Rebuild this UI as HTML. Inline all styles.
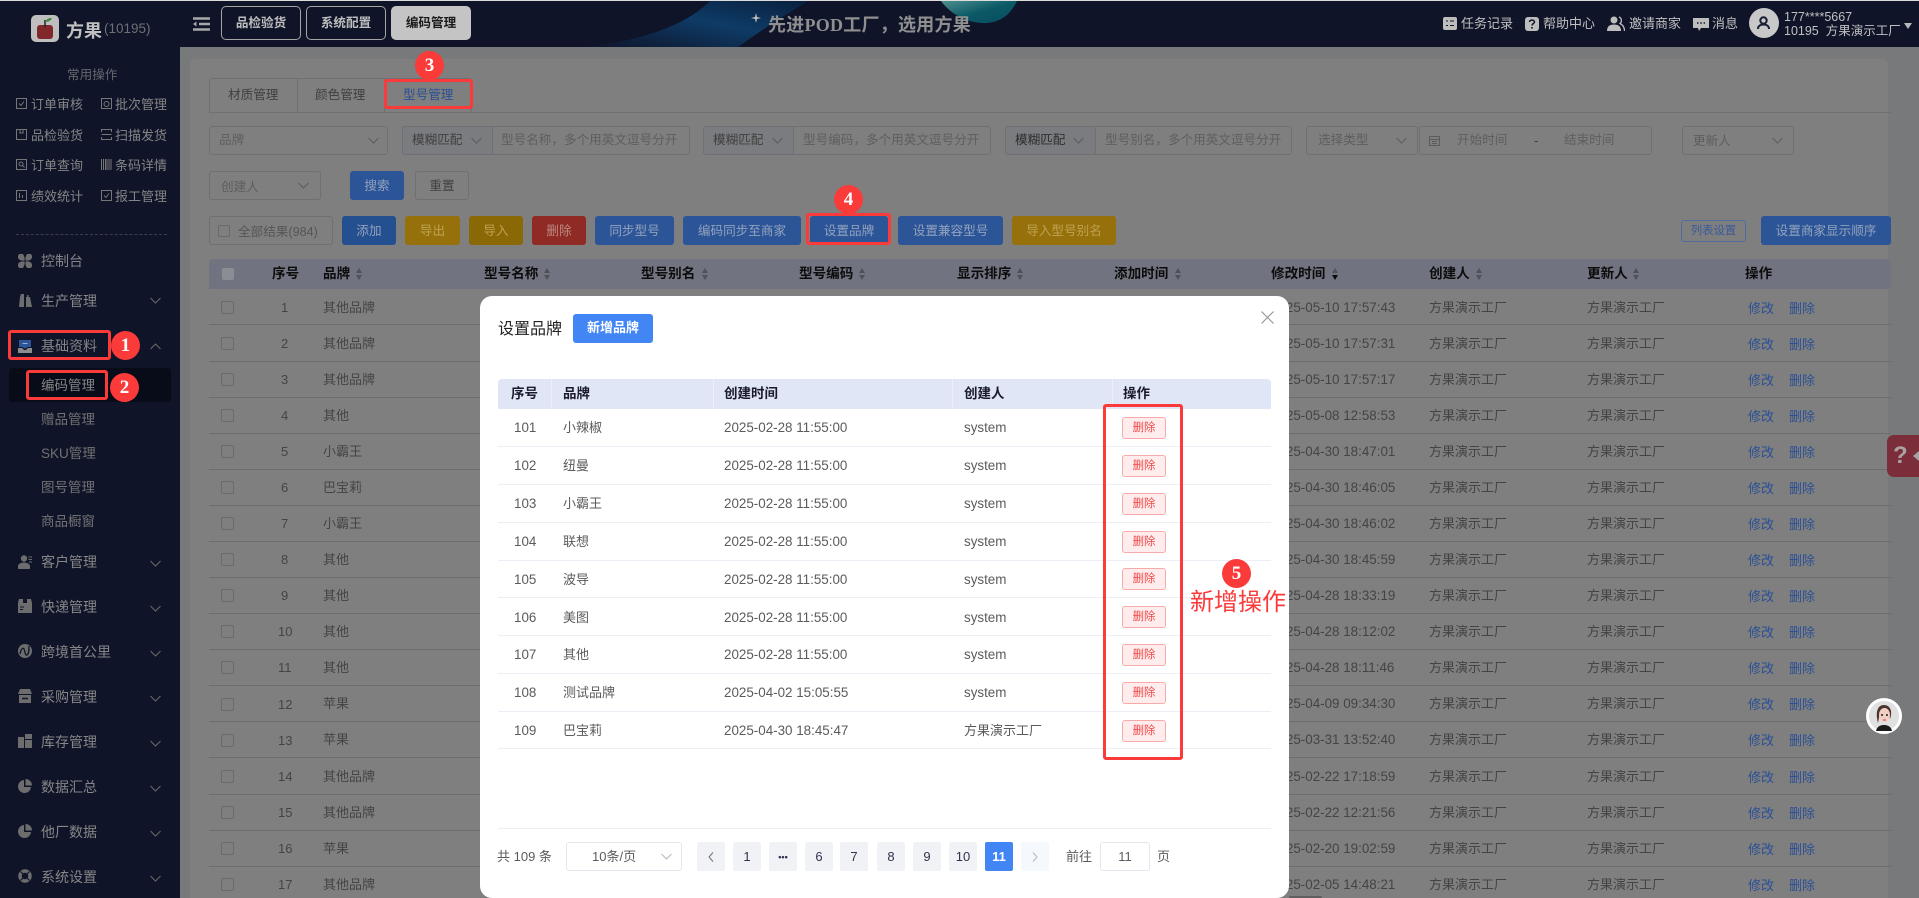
<!DOCTYPE html>
<html lang="zh"><head><meta charset="utf-8"><title>方果</title>
<style>
html,body{margin:0;padding:0}
body{width:1919px;height:898px;position:relative;overflow:hidden;background:#78797b;font-family:"Liberation Sans","Noto Sans CJK SC",sans-serif;font-size:13px;color:#444}
div,span,svg{position:absolute}
.t{white-space:nowrap;line-height:20px;margin-top:-9px}
.b{box-sizing:border-box;border:1px solid #6e7073;border-radius:3px}
.btn{box-sizing:border-box;border-radius:3px;height:29px;top:216px;line-height:30px;text-align:center;color:#93a2bd;background:#2c5598;white-space:nowrap}
.or{background:#96700a;color:#bfa352}.rd{background:#8f2a24;color:#bd8a85}
.gr{color:#5e5e5e}.dk{color:#3f3f3f}
.th{font-weight:bold;color:#0c0c0c;font-size:13.6px;top:273px}
.s{width:7px;height:12px;top:268px}
.s::before,.s::after{content:"";position:absolute;left:0;border-left:3.5px solid transparent;border-right:3.5px solid transparent}
.s::before{top:0;border-bottom:5px solid #4f5158}
.s::after{bottom:0;border-top:5px solid #4f5158}
.s.dn::after{border-top-color:#0c0c0c}
.l{height:1px;background:#6d6d6d}
.ck{width:13px;height:13px;box-sizing:border-box;border:1px solid #6a6a6a;border-radius:2px;left:221px}
.a{color:#2b4f95}
.sb{color:#868686}
.m{font-size:14px;color:#868686;left:41px}
.sm{font-size:13.5px;color:#727272;left:41px}
.o{font-size:13px;color:#858585}
.ic{fill:none;stroke:#767676;stroke-width:1}
.mi{fill:#6d6d6d}
.ch{fill:none;stroke:#6a6a6a;stroke-width:1;left:150px;width:11px;height:7px}
.top{color:#c0c0c0;font-size:13px}
.tb{box-sizing:border-box;width:80px;height:34px;top:6px;border:1px solid #a5a5a5;border-radius:5px;color:#bdbdbd;font-weight:bold;text-align:center;line-height:33px;font-size:12.6px}
.red{box-sizing:border-box;border:3px solid #fb3a3a;border-radius:3px}
.cir{width:29px;height:29px;border-radius:50%;background:#fb3a3a;color:#fff;font:bold 19px/29px "Liberation Serif",serif;text-align:center}
.mh{font-weight:bold;color:#1a1a2a;font-size:13.5px;top:393px}
.md{color:#5b5b5b;font-size:13px}
.mn{font-size:13.4px}
.ml{height:1px;background:#ebeef5;left:498px;width:773px}
.del{box-sizing:border-box;left:1122px;width:44px;height:22px;background:#ffeded;border:1px solid #f8a9a9;border-radius:3px;color:#f04848;font-size:11.4px;line-height:20px;text-align:center}
.pg{box-sizing:border-box;top:842px;height:29px;width:28px;background:#f0f2f5;border-radius:2px;text-align:center;line-height:30px;color:#303350;font-size:13px}
.sp{width:1px;background:#edf0fa;top:379px;height:30px}
</style></head><body>

<!-- top bar -->
<div style="left:0;top:1px;width:1919px;height:46px;background:#0f1429"></div>
<div style="left:0;top:0;width:1919px;height:1px;background:#dcdcdc"></div>
<svg style="left:580px;top:1px" width="460" height="46" viewBox="0 0 460 46"><defs><linearGradient id="g1" x1="0" y1="1" x2="1" y2="0"><stop offset="0" stop-color="#0f1429"/><stop offset=".55" stop-color="#0e3b66"/><stop offset="1" stop-color="#091f3d"/></linearGradient><linearGradient id="g2" x1="0" y1="0" x2="1" y2="1"><stop offset="0" stop-color="#4f9090"/><stop offset=".5" stop-color="#0b5a66"/><stop offset="1" stop-color="#0a4a60"/></linearGradient></defs>
<path d="M5 46C60 40 105 25 130 0H228C205 14 180 30 158 46Z" fill="url(#g1)"/>
<path d="M361 0H437C430 15 418 23 402 22C384 21 370 12 361 0Z" fill="url(#g2)"/></svg>
<svg style="left:750px;top:12px" width="12" height="12" viewBox="0 0 12 12"><path d="M6 1L7 5 11 6 7 7 6 11 5 7 1 6 5 5Z" fill="#bdbdbd"/></svg>
<div class="t" style="left:768px;top:24px;font:bold 18px/20px 'Liberation Serif','Noto Sans CJK SC',serif;color:#8f8f8f;letter-spacing:.25px">先进POD工厂，选用方果</div>

<!-- sidebar -->
<div style="left:0;top:47px;width:180px;height:851px;background:#0f1429"></div>
<svg style="left:31px;top:15px" width="28" height="27" viewBox="0 0 28 27"><rect width="28" height="27" rx="5" fill="#bfbfbf"/><rect x="6" y="10" width="16" height="14" rx="3" fill="#82282c"/><path d="M14 12V5" stroke="#222" stroke-width="1.5"/><path d="M14 7C16 3 19 3 21 3 20 6 17 7 14 7Z" fill="#3d8a3d"/></svg>
<div class="t" style="left:66px;top:30px;font-size:18px;font-weight:bold;color:#c0c0c0">方果</div>
<div class="t" style="left:104px;top:28px;font-size:13.5px;color:#6f7075">(10195)</div>
<svg style="left:193px;top:17px" width="17" height="14" viewBox="0 0 17 14"><path d="M0 1.5H17M6 7H17M0 12.5H17" stroke="#a8a8a8" stroke-width="2.4"/><path d="M3.500 4.500L0 7 3.500 9.500Z" fill="#a8a8a8"/></svg>
<div class="tb" style="left:221px">品检验货</div>
<div class="tb" style="left:306px">系统配置</div>
<div class="tb" style="left:391px;background:#c4c4c4;color:#1b1b1b;border-color:#c4c4c4">编码管理</div>

<div class="t" style="left:67px;top:74px;font-size:12.6px;color:#66676c">常用操作</div>
<svg style="left:16px;top:98px" width="11" height="11"><rect x=".5" y=".5" width="10" height="10" class="ic"/><path d="M3 5.500L5 7.500 8 3.500" class="ic"/></svg>
<div class="t o" style="left:31px;top:104px">订单审核</div>
<svg style="left:101px;top:98px" width="11" height="11"><rect x=".5" y=".5" width="10" height="10" class="ic"/><circle cx="5.500" cy="6" r="2.500" class="ic"/></svg>
<div class="t o" style="left:115px;top:104px">批次管理</div>
<svg style="left:16px;top:129px" width="11" height="11"><path d="M.5 10.500V.5H10.500V10.500ZM4 .5V4H7V.5" class="ic"/></svg>
<div class="t o" style="left:31px;top:135px">品检验货</div>
<svg style="left:101px;top:129px" width="11" height="11"><path d="M.5 3V.5H10.500V3M.5 5.500H10.500M.5 8V10.500H10.500V8" class="ic"/></svg>
<div class="t o" style="left:115px;top:135px">扫描发货</div>
<svg style="left:16px;top:159px" width="11" height="11"><rect x=".5" y=".5" width="10" height="10" class="ic"/><circle cx="5" cy="5" r="2" class="ic"/><path d="M6.500 6.500L8.500 8.500" class="ic"/></svg>
<div class="t o" style="left:31px;top:165px">订单查询</div>
<svg style="left:101px;top:159px" width="11" height="11"><path d="M.5 0V11M2.500 0V11M4.500 0V11M6 0V11M8 0V11M10 0V11" class="ic"/></svg>
<div class="t o" style="left:115px;top:165px">条码详情</div>
<svg style="left:16px;top:190px" width="11" height="11"><rect x=".5" y=".5" width="10" height="10" class="ic"/><path d="M3.500 3V8M6.500 5V8" class="ic"/></svg>
<div class="t o" style="left:31px;top:196px">绩效统计</div>
<svg style="left:101px;top:190px" width="11" height="11"><rect x=".5" y=".5" width="10" height="10" class="ic"/><path d="M3 5.500L5 7.500 8 3.500" class="ic"/></svg>
<div class="t o" style="left:115px;top:196px">报工管理</div>
<div style="left:16px;top:234px;width:151px;height:0;border-top:1px dashed #3a3e4e"></div>

<svg style="left:18px;top:254px" width="14" height="14" viewBox="0 0 14 14"><path class="mi" d="M0 3A3 3 0 0 1 6 2Q7 4 6.500 6.500 4 7 2 6 0 5 0 3ZM8 2A3 3 0 0 1 14 3Q14 5 12 6 10 7 7.500 6.500 7 4 8 2ZM0 11A3 3 0 0 0 6 12Q7 10 6.500 7.500 4 7 2 8 0 9 0 11ZM8 12A3 3 0 0 0 14 11Q14 9 12 8 10 7 7.500 7.500 7 10 8 12Z"/></svg>
<div class="t m" style="top:260px">控制台</div>
<svg style="left:18px;top:293px" width="14" height="14" viewBox="0 0 14 14"><path class="mi" d="M1 14L2 4 3 1H6V14ZM8 14V4H9V2H10.500V4H12L14 14Z"/></svg>
<div class="t m" style="top:300px">生产管理</div>
<svg class="ch" style="top:297px" viewBox="0 0 11 7"><path d="M.5 1L5.500 6 10.500 1"/></svg>
<svg style="left:18px;top:339px" width="14" height="14" viewBox="0 0 14 14"><path d="M1 1H13V8H9.500L8 9.500H6L4.500 8H1Z" fill="#2b5596"/><path d="M4.500 4.500H9.500" stroke="#a0aec8" stroke-width="1"/><path d="M0 9H4L6 11H8L10 9H14V14H0Z" fill="#8c8c8c"/></svg>
<div class="t m" style="top:345px">基础资料</div>
<svg class="ch" style="top:343px" viewBox="0 0 11 7"><path d="M.5 6L5.500 1 10.500 6"/></svg>
<div style="left:9px;top:368px;width:162px;height:34px;background:#080b18;border-radius:4px"></div>
<div class="t sm" style="top:385px;color:#868686">编码管理</div>
<div class="t sm" style="top:419px">赠品管理</div>
<div class="t sm" style="top:453px">SKU管理</div>
<div class="t sm" style="top:487px">图号管理</div>
<div class="t sm" style="top:521px">商品橱窗</div>
<svg style="left:18px;top:555px" width="14" height="14" viewBox="0 0 14 14"><circle cx="6" cy="3.500" r="3.200" class="mi"/><path class="mi" d="M0 14V11C0 9 3 7.500 6 7.500S12 9 12 11V14Z"/><path d="M10.500 2H14M10.500 4.500H14M11 7H14" stroke="#6d6d6d"/></svg>
<div class="t m" style="top:561px">客户管理</div>
<svg class="ch" style="top:560px" viewBox="0 0 11 7"><path d="M.5 1L5.500 6 10.500 1"/></svg>
<svg style="left:18px;top:599px" width="14" height="14" viewBox="0 0 14 14"><path class="mi" d="M1 0H5V4H9V0H13L14 4V14H0V4Z"/><path d="M2 8H6M2 10.500H5" stroke="#0f1429"/></svg>
<div class="t m" style="top:606px">快递管理</div>
<svg class="ch" style="top:605px" viewBox="0 0 11 7"><path d="M.5 1L5.500 6 10.500 1"/></svg>
<svg style="left:18px;top:644px" width="14" height="14" viewBox="0 0 14 14"><circle cx="7" cy="7" r="7" class="mi"/><path d="M2 10C3 5 5 3 6 5S7 12 9 11 11 6 11 2" fill="none" stroke="#0f1429" stroke-width="1.300"/></svg>
<div class="t m" style="top:651px">跨境首公里</div>
<svg class="ch" style="top:650px" viewBox="0 0 11 7"><path d="M.5 1L5.500 6 10.500 1"/></svg>
<svg style="left:18px;top:689px" width="14" height="14" viewBox="0 0 14 14"><path class="mi" d="M2 0H12L14 5H0ZM1 6H13V14H1Z"/><path d="M4 9.500H10" stroke="#0f1429" stroke-width="1.500"/></svg>
<div class="t m" style="top:696px">采购管理</div>
<svg class="ch" style="top:695px" viewBox="0 0 11 7"><path d="M.5 1L5.500 6 10.500 1"/></svg>
<svg style="left:18px;top:734px" width="14" height="14" viewBox="0 0 14 14"><path class="mi" d="M0 3H6V14H0ZM7 0H14V5H7ZM7 6H14V14H7Z"/></svg>
<div class="t m" style="top:741px">库存管理</div>
<svg class="ch" style="top:740px" viewBox="0 0 11 7"><path d="M.5 1L5.500 6 10.500 1"/></svg>
<svg style="left:18px;top:779px" width="14" height="14" viewBox="0 0 14 14"><path class="mi" d="M6 1A6.500 6.500 0 1 0 13 8H6ZM7.500 0V6.500H14A6.500 6.500 0 0 0 7.500 0Z"/></svg>
<div class="t m" style="top:786px">数据汇总</div>
<svg class="ch" style="top:785px" viewBox="0 0 11 7"><path d="M.5 1L5.500 6 10.500 1"/></svg>
<svg style="left:18px;top:824px" width="14" height="14" viewBox="0 0 14 14"><path class="mi" d="M6 1A6.500 6.500 0 1 0 13 8H6ZM7.500 0V6.500H14A6.500 6.500 0 0 0 7.500 0Z"/></svg>
<div class="t m" style="top:831px">他厂数据</div>
<svg class="ch" style="top:830px" viewBox="0 0 11 7"><path d="M.5 1L5.500 6 10.500 1"/></svg>
<svg style="left:18px;top:869px" width="14" height="14" viewBox="0 0 14 14"><circle cx="7" cy="7" r="5" fill="none" stroke="#6d6d6d" stroke-width="3.500"/><path d="M2.500 2.500L5 5M9 9L11.500 11.500M11.500 2.500L9 5M5 9L2.500 11.500" stroke="#0f1429" stroke-width="1.200"/></svg>
<div class="t m" style="top:876px">系统设置</div>
<svg class="ch" style="top:875px" viewBox="0 0 11 7"><path d="M.5 1L5.500 6 10.500 1"/></svg>

<!-- top right -->
<svg style="left:1443px;top:17px" width="14" height="14" viewBox="0 0 14 14"><rect width="14" height="13" rx="2" fill="#bdbdbd"/><path d="M3 4H5M7 4H11M3 8.500H5M7 8.500H11" stroke="#0f1429"/></svg>
<div class="t top" style="left:1461px;top:23px">任务记录</div>
<svg style="left:1525px;top:17px" width="14" height="14" viewBox="0 0 14 14"><rect width="14" height="14" rx="3" fill="#bdbdbd"/><path d="M4.500 5C4.500 2.500 9.500 2.500 9.500 5 9.500 6.500 7 6.500 7 8.500" fill="none" stroke="#0f1429" stroke-width="1.500"/><rect x="6.200" y="10" width="1.600" height="1.600" fill="#0f1429"/></svg>
<div class="t top" style="left:1543px;top:23px">帮助中心</div>
<svg style="left:1607px;top:16px" width="18" height="15" viewBox="0 0 18 15"><circle cx="7" cy="4" r="3.500" fill="#bdbdbd"/><path d="M0 15C0 10 3 8.500 7 8.500S14 10 14 15Z" fill="#bdbdbd"/><path d="M12 1C15 2 15 6 13 7.500 16 9 17.500 11 17.500 15" fill="none" stroke="#bdbdbd" stroke-width="1.300"/></svg>
<div class="t top" style="left:1629px;top:23px">邀请商家</div>
<svg style="left:1693px;top:17px" width="16" height="15" viewBox="0 0 16 15"><path d="M0 1H16V11H8L6 14 5 11H0Z" fill="#bdbdbd"/><path d="M4 6H5.500M7.300 6H8.800M10.600 6H12" stroke="#0f1429" stroke-width="1.500"/></svg>
<div class="t top" style="left:1712px;top:23px">消息</div>
<div style="left:1749px;top:8px;width:30px;height:30px;border-radius:50%;background:#c8c8c8"></div>
<svg style="left:1757px;top:16px" width="13" height="14" viewBox="0 0 13 14"><circle cx="6.500" cy="4.500" r="3.200" fill="none" stroke="#1a1e33" stroke-width="2"/><path d="M1 13C1 9.500 4 8.500 6.500 8.500S12 9.500 12 13" fill="none" stroke="#1a1e33" stroke-width="2"/></svg>
<div class="t top" style="left:1784px;top:16px;font-size:12.5px">177****5667</div>
<div class="t top" style="left:1784px;top:30px;font-size:12.5px">10195 &nbsp;方果演示工厂</div>
<svg style="left:1904px;top:23px" width="8" height="6"><path d="M0 0H8L4 6Z" fill="#b8b8b8"/></svg>

<!-- card -->
<div style="left:190px;top:59px;width:1698px;height:839px;background:#7f7f7f;border-radius:6px 6px 0 0"></div>
<div style="left:209px;top:112px;width:1682px;height:1px;background:#6e7073"></div>
<div style="box-sizing:border-box;left:209px;top:78px;width:263px;height:35px;border:1px solid #6e7073;border-bottom:0;border-radius:3px 3px 0 0"></div>
<div style="left:297px;top:78px;width:1px;height:35px;background:#6e7073"></div>
<div style="left:384px;top:78px;width:1px;height:35px;background:#6e7073"></div>
<div class="t dk" style="left:228px;top:94px;font-size:12.6px">材质管理</div>
<div class="t dk" style="left:315px;top:94px;font-size:12.6px">颜色管理</div>
<div class="t a" style="left:403px;top:94px;font-size:12.6px">型号管理</div>

<!-- filters -->
<div class="b" style="left:209px;top:126px;width:179px;height:29px"></div>
<div class="t gr" style="left:219px;top:139px;font-size:12.6px">品牌</div>
<svg class="ch" style="left:368px;top:137px;stroke:#5c5c5c" viewBox="0 0 11 7"><path d="M.5 1L5.500 6 10.500 1"/></svg>

<div class="b" style="left:402px;top:126px;width:288px;height:29px"></div>
<div class="b" style="left:402px;top:126px;width:91px;height:29px;background:#7b7c7f;border-radius:3px 0 0 3px"></div>
<div class="t dk" style="left:412px;top:139px;font-size:12.6px">模糊匹配</div>
<svg class="ch" style="left:471px;top:137px;stroke:#5c5c5c" viewBox="0 0 11 7"><path d="M.5 1L5.500 6 10.500 1"/></svg>
<div class="t gr" style="left:501px;top:139px;font-size:12.6px">型号名称，多个用英文逗号分开</div>

<div class="b" style="left:703px;top:126px;width:288px;height:29px"></div>
<div class="b" style="left:703px;top:126px;width:91px;height:29px;background:#7b7c7f;border-radius:3px 0 0 3px"></div>
<div class="t dk" style="left:713px;top:139px;font-size:12.6px">模糊匹配</div>
<svg class="ch" style="left:772px;top:137px;stroke:#5c5c5c" viewBox="0 0 11 7"><path d="M.5 1L5.500 6 10.500 1"/></svg>
<div class="t gr" style="left:803px;top:139px;font-size:12.6px">型号编码，多个用英文逗号分开</div>

<div class="b" style="left:1005px;top:126px;width:287px;height:29px"></div>
<div class="b" style="left:1005px;top:126px;width:91px;height:29px;background:#7b7c7f;border-radius:3px 0 0 3px"></div>
<div class="t" style="left:1015px;top:139px;font-size:12.6px;color:#2e2e2e">模糊匹配</div>
<svg class="ch" style="left:1073px;top:137px;stroke:#5c5c5c" viewBox="0 0 11 7"><path d="M.5 1L5.500 6 10.500 1"/></svg>
<div class="t gr" style="left:1105px;top:139px;font-size:12.6px">型号别名，多个用英文逗号分开</div>

<div class="b" style="left:1306px;top:126px;width:112px;height:29px"></div>
<div class="t gr" style="left:1318px;top:139px;font-size:12.6px">选择类型</div>
<svg class="ch" style="left:1396px;top:137px;stroke:#5c5c5c" viewBox="0 0 11 7"><path d="M.5 1L5.500 6 10.500 1"/></svg>

<div class="b" style="left:1419px;top:126px;width:233px;height:29px"></div>
<svg style="left:1429px;top:135px" width="11" height="11"><rect x=".5" y="1.500" width="10" height="9" fill="none" stroke="#5c5c5c"/><path d="M.5 4.500H10.500M3 6.500H8M3 8.500H8" stroke="#5c5c5c"/></svg>
<div class="t gr" style="left:1457px;top:139px;font-size:12.6px">开始时间</div>
<div class="t dk" style="left:1534px;top:140px">-</div>
<div class="t gr" style="left:1564px;top:139px;font-size:12.6px">结束时间</div>

<div class="b" style="left:1682px;top:126px;width:112px;height:29px"></div>
<div class="t gr" style="left:1693px;top:140px;font-size:12.6px">更新人</div>
<svg class="ch" style="left:1772px;top:137px;stroke:#5c5c5c" viewBox="0 0 11 7"><path d="M.5 1L5.500 6 10.500 1"/></svg>

<div class="b" style="left:209px;top:171px;width:112px;height:29px"></div>
<div class="t gr" style="left:221px;top:186px;font-size:12.6px">创建人</div>
<svg class="ch" style="left:298px;top:182px;stroke:#5c5c5c" viewBox="0 0 11 7"><path d="M.5 1L5.500 6 10.500 1"/></svg>
<div class="btn" style="left:350px;top:171px;width:54px;font-size:12.6px">搜索</div>
<div class="b dk" style="left:415px;top:171px;width:54px;height:29px;line-height:28px;text-align:center;font-size:12.6px">重置</div>

<!-- action row -->
<div class="b" style="left:209px;top:216px;width:124px;height:29px"></div>
<div style="box-sizing:border-box;left:218px;top:225px;width:12px;height:12px;border:1px solid #6a6a6a;border-radius:2px"></div>
<div class="t" style="left:238px;top:231px;font-size:12.6px;color:#555">全部结果(984)</div>
<div class="btn" style="left:342px;width:54px;font-size:12.6px;background:#24508f">添加</div>
<div class="btn or" style="left:405px;width:55px;font-size:12.6px">导出</div>
<div class="btn or" style="left:469px;width:54px;font-size:12.6px;background:#8a6805">导入</div>
<div class="btn rd" style="left:532px;width:54px;font-size:12.6px">删除</div>
<div class="btn" style="left:595px;width:79px;font-size:12.6px">同步型号</div>
<div class="btn" style="left:683px;width:118px;font-size:12.6px">编码同步至商家</div>
<div class="btn" style="left:810px;width:78px;font-size:12.6px">设置品牌</div>
<div class="btn" style="left:898px;width:105px;font-size:12.6px">设置兼容型号</div>
<div class="btn or" style="left:1012px;width:104px;font-size:12.6px">导入型号别名</div>
<div class="b a" style="left:1681px;top:220px;width:65px;height:22px;line-height:20px;text-align:center;font-size:11.4px;border-color:#4f6c9e;color:#3a5a99">列表设置</div>
<div class="btn" style="left:1761px;width:130px;font-size:12.6px">设置商家显示顺序</div>

<!-- table head -->
<div style="left:209px;top:259px;width:1682px;height:30px;background:#717480;border-radius:4px 4px 0 0"></div>
<div style="left:222px;top:268px;width:12px;height:12px;background:#8b8d94;border-radius:2px"></div>
<div class="t th" style="left:272px">序号</div>
<div class="t th" style="left:323px">品牌</div><div class="s" style="left:356px"></div>
<div class="t th" style="left:484px">型号名称</div><div class="s" style="left:544px"></div>
<div class="t th" style="left:641px">型号别名</div><div class="s" style="left:702px"></div>
<div class="t th" style="left:799px">型号编码</div><div class="s" style="left:859px"></div>
<div class="t th" style="left:957px">显示排序</div><div class="s" style="left:1017px"></div>
<div class="t th" style="left:1114px">添加时间</div><div class="s" style="left:1175px"></div>
<div class="t th" style="left:1271px">修改时间</div><div class="s dn" style="left:1332px"></div>
<div class="t th" style="left:1429px">创建人</div><div class="s" style="left:1476px"></div>
<div class="t th" style="left:1587px">更新人</div><div class="s" style="left:1633px"></div>
<div class="t th" style="left:1745px">操作</div>

<!-- rows left -->
<div class="ck" style="top:301px"></div><div class="t" style="left:281px;top:307px">1</div><div class="t" style="left:323px;top:307px">其他品牌</div><div class="l" style="left:209px;width:1682px;top:324px"></div>
<div class="ck" style="top:337px"></div><div class="t" style="left:281px;top:343px">2</div><div class="t" style="left:323px;top:343px">其他品牌</div><div class="l" style="left:209px;width:1682px;top:361px"></div>
<div class="ck" style="top:373px"></div><div class="t" style="left:281px;top:379px">3</div><div class="t" style="left:323px;top:379px">其他品牌</div><div class="l" style="left:209px;width:1682px;top:397px"></div>
<div class="ck" style="top:409px"></div><div class="t" style="left:281px;top:415px">4</div><div class="t" style="left:323px;top:415px">其他</div><div class="l" style="left:209px;width:1682px;top:433px"></div>
<div class="ck" style="top:445px"></div><div class="t" style="left:281px;top:451px">5</div><div class="t" style="left:323px;top:451px">小霸王</div><div class="l" style="left:209px;width:1682px;top:469px"></div>
<div class="ck" style="top:481px"></div><div class="t" style="left:281px;top:487px">6</div><div class="t" style="left:323px;top:487px">巴宝莉</div><div class="l" style="left:209px;width:1682px;top:505px"></div>
<div class="ck" style="top:517px"></div><div class="t" style="left:281px;top:523px">7</div><div class="t" style="left:323px;top:523px">小霸王</div><div class="l" style="left:209px;width:1682px;top:541px"></div>
<div class="ck" style="top:553px"></div><div class="t" style="left:281px;top:559px">8</div><div class="t" style="left:323px;top:559px">其他</div><div class="l" style="left:209px;width:1682px;top:577px"></div>
<div class="ck" style="top:589px"></div><div class="t" style="left:281px;top:595px">9</div><div class="t" style="left:323px;top:595px">其他</div><div class="l" style="left:209px;width:1682px;top:613px"></div>
<div class="ck" style="top:625px"></div><div class="t" style="left:278px;top:631px">10</div><div class="t" style="left:323px;top:631px">其他</div><div class="l" style="left:209px;width:1682px;top:649px"></div>
<div class="ck" style="top:661px"></div><div class="t" style="left:278px;top:667px">11</div><div class="t" style="left:323px;top:667px">其他</div><div class="l" style="left:209px;width:1682px;top:685px"></div>
<div class="ck" style="top:698px"></div><div class="t" style="left:278px;top:704px">12</div><div class="t" style="left:323px;top:703px">苹果</div><div class="l" style="left:209px;width:1682px;top:721px"></div>
<div class="ck" style="top:734px"></div><div class="t" style="left:278px;top:740px">13</div><div class="t" style="left:323px;top:739px">苹果</div><div class="l" style="left:209px;width:1682px;top:757px"></div>
<div class="ck" style="top:770px"></div><div class="t" style="left:278px;top:776px">14</div><div class="t" style="left:323px;top:776px">其他品牌</div><div class="l" style="left:209px;width:1682px;top:794px"></div>
<div class="ck" style="top:806px"></div><div class="t" style="left:278px;top:812px">15</div><div class="t" style="left:323px;top:812px">其他品牌</div><div class="l" style="left:209px;width:1682px;top:830px"></div>
<div class="ck" style="top:842px"></div><div class="t" style="left:278px;top:848px">16</div><div class="t" style="left:323px;top:848px">苹果</div><div class="l" style="left:209px;width:1682px;top:866px"></div>
<div class="ck" style="top:878px"></div><div class="t" style="left:278px;top:884px">17</div><div class="t" style="left:323px;top:884px">其他品牌</div>

<!-- rows right -->
<div class="t mn" style="left:1271px;top:307px">2025-05-10 17:57:43</div><div class="t" style="left:1429px;top:307px">方果演示工厂</div><div class="t" style="left:1587px;top:307px">方果演示工厂</div><div class="t a" style="left:1748px;top:308px">修改</div><div class="t a" style="left:1789px;top:308px">删除</div>
<div class="t mn" style="left:1271px;top:343px">2025-05-10 17:57:31</div><div class="t" style="left:1429px;top:343px">方果演示工厂</div><div class="t" style="left:1587px;top:343px">方果演示工厂</div><div class="t a" style="left:1748px;top:344px">修改</div><div class="t a" style="left:1789px;top:344px">删除</div>
<div class="t mn" style="left:1271px;top:379px">2025-05-10 17:57:17</div><div class="t" style="left:1429px;top:379px">方果演示工厂</div><div class="t" style="left:1587px;top:379px">方果演示工厂</div><div class="t a" style="left:1748px;top:380px">修改</div><div class="t a" style="left:1789px;top:380px">删除</div>
<div class="t mn" style="left:1271px;top:415px">2025-05-08 12:58:53</div><div class="t" style="left:1429px;top:415px">方果演示工厂</div><div class="t" style="left:1587px;top:415px">方果演示工厂</div><div class="t a" style="left:1748px;top:416px">修改</div><div class="t a" style="left:1789px;top:416px">删除</div>
<div class="t mn" style="left:1271px;top:451px">2025-04-30 18:47:01</div><div class="t" style="left:1429px;top:451px">方果演示工厂</div><div class="t" style="left:1587px;top:451px">方果演示工厂</div><div class="t a" style="left:1748px;top:452px">修改</div><div class="t a" style="left:1789px;top:452px">删除</div>
<div class="t mn" style="left:1271px;top:487px">2025-04-30 18:46:05</div><div class="t" style="left:1429px;top:487px">方果演示工厂</div><div class="t" style="left:1587px;top:487px">方果演示工厂</div><div class="t a" style="left:1748px;top:488px">修改</div><div class="t a" style="left:1789px;top:488px">删除</div>
<div class="t mn" style="left:1271px;top:523px">2025-04-30 18:46:02</div><div class="t" style="left:1429px;top:523px">方果演示工厂</div><div class="t" style="left:1587px;top:523px">方果演示工厂</div><div class="t a" style="left:1748px;top:524px">修改</div><div class="t a" style="left:1789px;top:524px">删除</div>
<div class="t mn" style="left:1271px;top:559px">2025-04-30 18:45:59</div><div class="t" style="left:1429px;top:559px">方果演示工厂</div><div class="t" style="left:1587px;top:559px">方果演示工厂</div><div class="t a" style="left:1748px;top:560px">修改</div><div class="t a" style="left:1789px;top:560px">删除</div>
<div class="t mn" style="left:1271px;top:595px">2025-04-28 18:33:19</div><div class="t" style="left:1429px;top:595px">方果演示工厂</div><div class="t" style="left:1587px;top:595px">方果演示工厂</div><div class="t a" style="left:1748px;top:596px">修改</div><div class="t a" style="left:1789px;top:596px">删除</div>
<div class="t mn" style="left:1271px;top:631px">2025-04-28 18:12:02</div><div class="t" style="left:1429px;top:631px">方果演示工厂</div><div class="t" style="left:1587px;top:631px">方果演示工厂</div><div class="t a" style="left:1748px;top:632px">修改</div><div class="t a" style="left:1789px;top:632px">删除</div>
<div class="t mn" style="left:1271px;top:667px">2025-04-28 18:11:46</div><div class="t" style="left:1429px;top:667px">方果演示工厂</div><div class="t" style="left:1587px;top:667px">方果演示工厂</div><div class="t a" style="left:1748px;top:668px">修改</div><div class="t a" style="left:1789px;top:668px">删除</div>
<div class="t mn" style="left:1271px;top:703px">2025-04-09 09:34:30</div><div class="t" style="left:1429px;top:703px">方果演示工厂</div><div class="t" style="left:1587px;top:703px">方果演示工厂</div><div class="t a" style="left:1748px;top:704px">修改</div><div class="t a" style="left:1789px;top:704px">删除</div>
<div class="t mn" style="left:1271px;top:739px">2025-03-31 13:52:40</div><div class="t" style="left:1429px;top:739px">方果演示工厂</div><div class="t" style="left:1587px;top:739px">方果演示工厂</div><div class="t a" style="left:1748px;top:740px">修改</div><div class="t a" style="left:1789px;top:740px">删除</div>
<div class="t mn" style="left:1271px;top:776px">2025-02-22 17:18:59</div><div class="t" style="left:1429px;top:776px">方果演示工厂</div><div class="t" style="left:1587px;top:776px">方果演示工厂</div><div class="t a" style="left:1748px;top:777px">修改</div><div class="t a" style="left:1789px;top:777px">删除</div>
<div class="t mn" style="left:1271px;top:812px">2025-02-22 12:21:56</div><div class="t" style="left:1429px;top:812px">方果演示工厂</div><div class="t" style="left:1587px;top:812px">方果演示工厂</div><div class="t a" style="left:1748px;top:813px">修改</div><div class="t a" style="left:1789px;top:813px">删除</div>
<div class="t mn" style="left:1271px;top:848px">2025-02-20 19:02:59</div><div class="t" style="left:1429px;top:848px">方果演示工厂</div><div class="t" style="left:1587px;top:848px">方果演示工厂</div><div class="t a" style="left:1748px;top:849px">修改</div><div class="t a" style="left:1789px;top:849px">删除</div>
<div class="t mn" style="left:1271px;top:884px">2025-02-05 14:48:21</div><div class="t" style="left:1429px;top:884px">方果演示工厂</div><div class="t" style="left:1587px;top:884px">方果演示工厂</div><div class="t a" style="left:1748px;top:885px">修改</div><div class="t a" style="left:1789px;top:885px">删除</div>

<!-- floating -->
<div style="left:1887px;top:435px;width:32px;height:42px;background:#7c2d3a;border-radius:7px 0 0 7px"></div>
<div class="t" style="left:1893px;top:455px;font-size:24px;font-weight:bold;color:#a9a2a3">?</div>
<svg style="left:1913px;top:451px" width="6" height="10"><path d="M6 0L0 5 6 10Z" fill="#a9a2a3"/></svg>
<div style="box-sizing:border-box;left:1866px;top:698px;width:36px;height:36px;border-radius:50%;background:#e0e0e0;border:3px solid #fff"></div>
<svg style="left:1869px;top:701px" width="30" height="30" viewBox="0 0 30 30"><path d="M9 22C6 10 9 4 15 4S24 10 21 18L20 12 11 11Z" fill="#4a352d"/><ellipse cx="15.500" cy="14" rx="5.500" ry="7" fill="#f2cfc4"/><path d="M7 30C8 25 12 24 15 24S22 25 23 30Z" fill="#1a1a1a"/><circle cx="13" cy="14" r="1" fill="#222"/><circle cx="18" cy="14" r="1" fill="#222"/><path d="M14 19H17" stroke="#c44"/></svg>

<!-- scroll thumb -->
<div style="left:1289px;top:896px;width:33px;height:2px;background:#5f5f5f;border-radius:1px"></div>

<!-- modal -->
<div style="left:480px;top:296px;width:809px;height:602px;background:#fff;border-radius:12px"></div>
<div class="t" style="left:498px;top:329px;font-size:16px;color:#222">设置品牌</div>
<div style="box-sizing:border-box;left:573px;top:314px;width:80px;height:29px;background:#4285f4;border-radius:3px;color:#fff;font-size:13px;font-weight:bold;text-align:center;line-height:28px">新增品牌</div>
<svg style="left:1261px;top:311px" width="13" height="13"><path d="M.5 .5L12.500 12.500M12.500 .5L.5 12.500" stroke="#909399" stroke-width="1.100"/></svg>
<div style="left:498px;top:379px;width:773px;height:30px;background:#e1e6f6;border-radius:4px 4px 0 0"></div>
<div class="sp" style="left:551px"></div><div class="sp" style="left:713px"></div><div class="sp" style="left:952px"></div><div class="sp" style="left:1112px"></div>
<div class="t mh" style="left:511px">序号</div><div class="t mh" style="left:563px">品牌</div><div class="t mh" style="left:724px">创建时间</div><div class="t mh" style="left:964px">创建人</div><div class="t mh" style="left:1123px">操作</div>

<div class="t md mn" style="left:514px;top:427px">101</div><div class="t md" style="left:563px;top:427px">小辣椒</div><div class="t md mn" style="left:724px;top:427px">2025-02-28 11:55:00</div><div class="t md mn" style="left:964px;top:427px">system</div><div class="del" style="top:417px">删除</div><div class="ml" style="top:446px"></div>
<div class="t md mn" style="left:514px;top:465px">102</div><div class="t md" style="left:563px;top:465px">纽曼</div><div class="t md mn" style="left:724px;top:465px">2025-02-28 11:55:00</div><div class="t md mn" style="left:964px;top:465px">system</div><div class="del" style="top:455px">删除</div><div class="ml" style="top:484px"></div>
<div class="t md mn" style="left:514px;top:503px">103</div><div class="t md" style="left:563px;top:503px">小霸王</div><div class="t md mn" style="left:724px;top:503px">2025-02-28 11:55:00</div><div class="t md mn" style="left:964px;top:503px">system</div><div class="del" style="top:493px">删除</div><div class="ml" style="top:522px"></div>
<div class="t md mn" style="left:514px;top:541px">104</div><div class="t md" style="left:563px;top:541px">联想</div><div class="t md mn" style="left:724px;top:541px">2025-02-28 11:55:00</div><div class="t md mn" style="left:964px;top:541px">system</div><div class="del" style="top:531px">删除</div><div class="ml" style="top:560px"></div>
<div class="t md mn" style="left:514px;top:579px">105</div><div class="t md" style="left:563px;top:579px">波导</div><div class="t md mn" style="left:724px;top:579px">2025-02-28 11:55:00</div><div class="t md mn" style="left:964px;top:579px">system</div><div class="del" style="top:568px">删除</div><div class="ml" style="top:597px"></div>
<div class="t md mn" style="left:514px;top:617px">106</div><div class="t md" style="left:563px;top:617px">美图</div><div class="t md mn" style="left:724px;top:617px">2025-02-28 11:55:00</div><div class="t md mn" style="left:964px;top:617px">system</div><div class="del" style="top:606px">删除</div><div class="ml" style="top:635px"></div>
<div class="t md mn" style="left:514px;top:654px">107</div><div class="t md" style="left:563px;top:654px">其他</div><div class="t md mn" style="left:724px;top:654px">2025-02-28 11:55:00</div><div class="t md mn" style="left:964px;top:654px">system</div><div class="del" style="top:644px">删除</div><div class="ml" style="top:673px"></div>
<div class="t md mn" style="left:514px;top:692px">108</div><div class="t md" style="left:563px;top:692px">测试品牌</div><div class="t md mn" style="left:724px;top:692px">2025-04-02 15:05:55</div><div class="t md mn" style="left:964px;top:692px">system</div><div class="del" style="top:682px">删除</div><div class="ml" style="top:711px"></div>
<div class="t md mn" style="left:514px;top:730px">109</div><div class="t md" style="left:563px;top:730px">巴宝莉</div><div class="t md mn" style="left:724px;top:730px">2025-04-30 18:45:47</div><div class="t md" style="left:964px;top:730px">方果演示工厂</div><div class="del" style="top:720px">删除</div><div class="ml" style="top:748px"></div>

<div class="ml" style="top:828px"></div>
<div class="t md" style="left:497px;top:856px">共 109 条</div>
<div style="box-sizing:border-box;left:566px;top:842px;width:116px;height:29px;border:1px solid #e4e7ed;border-radius:3px"></div>
<div class="t md" style="left:592px;top:856px">10条/页</div>
<svg class="ch" style="left:661px;top:853px;stroke:#b4b7bf" viewBox="0 0 11 7"><path d="M.5 1L5.500 6 10.500 1"/></svg>
<div class="pg" style="left:697px"></div>
<svg style="left:708px;top:852px" width="6" height="10"><path d="M5 .5L1 5 5 9.500" fill="none" stroke="#6b6e80"/></svg>
<div class="pg" style="left:733px">1</div>
<div class="pg" style="left:769px;font-weight:bold;font-size:9px">•••</div>
<div class="pg" style="left:805px">6</div>
<div class="pg" style="left:840px">7</div>
<div class="pg" style="left:877px">8</div>
<div class="pg" style="left:913px">9</div>
<div class="pg" style="left:949px">10</div>
<div class="pg" style="left:985px;background:#4285f4;color:#fff;font-weight:bold">11</div>
<div class="pg" style="left:1021px;background:#f5f8fd"></div>
<svg style="left:1032px;top:852px" width="6" height="10"><path d="M1 .5L5 5 1 9.500" fill="none" stroke="#b4b7c4"/></svg>
<div class="t md" style="left:1066px;top:856px">前往</div>
<div style="box-sizing:border-box;left:1100px;top:842px;width:50px;height:29px;border:1px solid #e4e7ed;border-radius:3px;text-align:center;line-height:28px;color:#5b5b5b">11</div>
<div class="t md" style="left:1157px;top:856px">页</div>

<!-- annotations -->
<div class="red" style="left:8px;top:330px;width:103px;height:30px"></div>
<div class="cir" style="left:111px;top:331px">1</div>
<div class="red" style="left:26px;top:370px;width:82px;height:30px"></div>
<div class="cir" style="left:110px;top:373px">2</div>
<div class="red" style="left:384px;top:79px;width:89px;height:30px"></div>
<div class="cir" style="left:415px;top:51px">3</div>
<div class="red" style="left:806px;top:213px;width:85px;height:32px"></div>
<div class="cir" style="left:834px;top:185px">4</div>
<div class="red" style="left:1103px;top:404px;width:80px;height:356px"></div>
<div class="cir" style="left:1222px;top:559px">5</div>
<div class="t" style="left:1190px;top:602px;font-size:24px;line-height:24px;margin-top:-11px;color:#fb3a3a">新增操作</div>
</body></html>
